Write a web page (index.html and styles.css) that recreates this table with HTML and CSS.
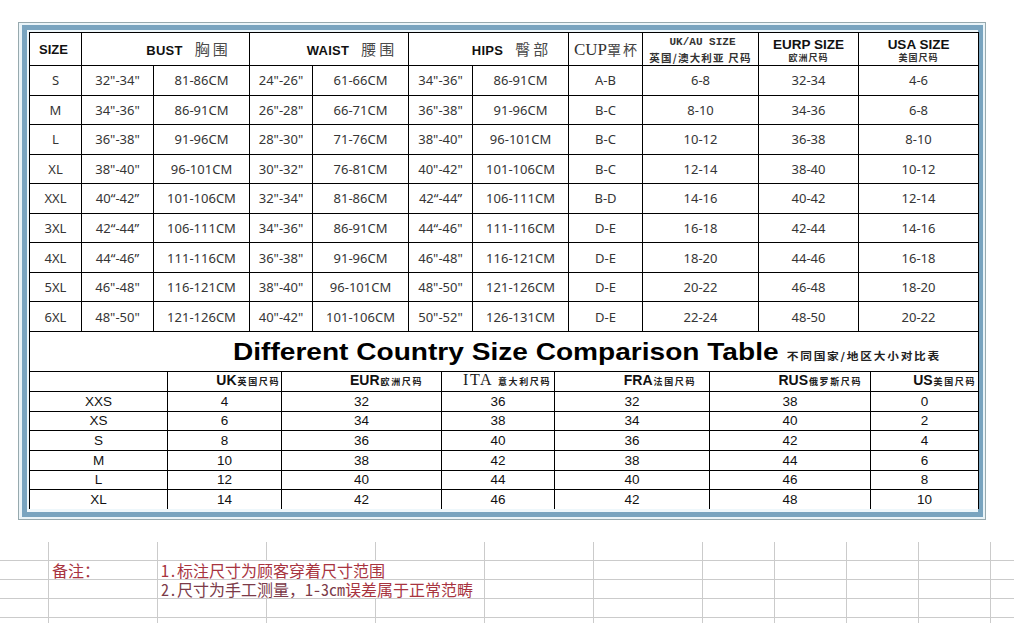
FILE: index.html
```html
<!DOCTYPE html>
<html lang="zh">
<head>
<meta charset="utf-8">
<title>Size Chart</title>
<link rel="stylesheet" href="styles.css">
</head>
<body>
<div class="frame">
  <div class="band">
    <div class="sheet">
      <table class="size">
        <colgroup>
          <col class="c52"><col class="c72"><col class="c96"><col class="c63"><col class="c96"><col class="c64"><col class="c96"><col class="c74"><col class="c116"><col class="c100"><col class="c120">
        </colgroup>
        <thead>
          <tr>
            <th class="h-plain">SIZE</th>
            <th colspan="2" class="h-shift"><span class="en">BUST</span><span class="cn">胸围</span></th>
            <th colspan="2" class="h-shift"><span class="en">WAIST</span><span class="cn">腰围</span></th>
            <th colspan="2" class="h-shift"><span class="en">HIPS</span><span class="cn">臀部</span></th>
            <th class="h-cup"><span class="serif">CUP</span><span class="cn-s">罩杯</span></th>
            <th class="h-ukau"><div class="mono">UK/AU SIZE</div><div class="tiny-cn">英国/澳大利亚 尺码</div></th>
            <th class="h-two"><div class="en2">EURP SIZE</div><div class="micro-cn">欧洲尺码</div></th>
            <th class="h-two"><div class="en2">USA SIZE</div><div class="micro-cn">美国尺码</div></th>
          </tr>
        </thead>
        <tbody>
          <tr><td>S</td><td>32"-34"</td><td>81-86CM</td><td>24"-26"</td><td>61-66CM</td><td>34"-36"</td><td>86-91CM</td><td>A-B</td><td>6-8</td><td>32-34</td><td>4-6</td></tr>
          <tr><td>M</td><td>34"-36"</td><td>86-91CM</td><td>26"-28"</td><td>66-71CM</td><td>36"-38"</td><td>91-96CM</td><td>B-C</td><td>8-10</td><td>34-36</td><td>6-8</td></tr>
          <tr><td>L</td><td>36"-38"</td><td>91-96CM</td><td>28"-30"</td><td>71-76CM</td><td>38"-40"</td><td>96-101CM</td><td>B-C</td><td>10-12</td><td>36-38</td><td>8-10</td></tr>
          <tr><td>XL</td><td>38"-40"</td><td>96-101CM</td><td>30"-32"</td><td>76-81CM</td><td>40"-42"</td><td>101-106CM</td><td>B-C</td><td>12-14</td><td>38-40</td><td>10-12</td></tr>
          <tr><td>XXL</td><td>40“-42”</td><td>101-106CM</td><td>32"-34"</td><td>81-86CM</td><td>42“-44”</td><td>106-111CM</td><td>B-D</td><td>14-16</td><td>40-42</td><td>12-14</td></tr>
          <tr><td>3XL</td><td>42“-44”</td><td>106-111CM</td><td>34"-36"</td><td>86-91CM</td><td>44“-46"</td><td>111-116CM</td><td>D-E</td><td>16-18</td><td>42-44</td><td>14-16</td></tr>
          <tr><td>4XL</td><td>44“-46”</td><td>111-116CM</td><td>36"-38"</td><td>91-96CM</td><td>46"-48"</td><td>116-121CM</td><td>D-E</td><td>18-20</td><td>44-46</td><td>16-18</td></tr>
          <tr><td>5XL</td><td>46"-48"</td><td>116-121CM</td><td>38"-40"</td><td>96-101CM</td><td>48"-50"</td><td>121-126CM</td><td>D-E</td><td>20-22</td><td>46-48</td><td>18-20</td></tr>
          <tr><td>6XL</td><td>48"-50"</td><td>121-126CM</td><td>40"-42"</td><td>101-106CM</td><td>50"-52"</td><td>126-131CM</td><td>D-E</td><td>22-24</td><td>48-50</td><td>20-22</td></tr>
        </tbody>
      </table>

      <div class="title-row">
        <div class="title-inner">
          <span class="title">Different Country Size Comparison Table</span><span class="title-cn">不同国家/地区大小对比表</span>
        </div>
      </div>

      <table class="compare">
        <colgroup>
          <col class="d138"><col class="d114"><col class="d160"><col class="d113"><col class="d155"><col class="d161"><col class="d108">
        </colgroup>
        <thead>
          <tr>
            <th></th>
            <th class="pr1"><span class="k">UK</span><span class="k-cn">英国尺码</span></th>
            <th class="pr18"><span class="k">EUR</span><span class="k-cn">欧洲尺码</span></th>
            <th class="pr3"><span class="k-serif">ITA</span><span class="k-cn">意大利尺码</span></th>
            <th class="pr13"><span class="k">FRA</span><span class="k-cn">法国尺码</span></th>
            <th class="pr8"><span class="k">RUS</span><span class="k-cn">俄罗斯尺码</span></th>
            <th class="pr2"><span class="k">US</span><span class="k-cn">美国尺码</span></th>
          </tr>
        </thead>
        <tbody>
          <tr><td>XXS</td><td>4</td><td>32</td><td>36</td><td>32</td><td>38</td><td>0</td></tr>
          <tr><td>XS</td><td>6</td><td>34</td><td>38</td><td>34</td><td>40</td><td>2</td></tr>
          <tr><td>S</td><td>8</td><td>36</td><td>40</td><td>36</td><td>42</td><td>4</td></tr>
          <tr><td>M</td><td>10</td><td>38</td><td>42</td><td>38</td><td>44</td><td>6</td></tr>
          <tr><td>L</td><td>12</td><td>40</td><td>44</td><td>40</td><td>46</td><td>8</td></tr>
          <tr><td>XL</td><td>14</td><td>42</td><td>46</td><td>42</td><td>48</td><td>10</td></tr>
        </tbody>
      </table>
    </div>
  </div>
</div>

<div class="grid">
  <div class="g"></div><div class="g"></div><div class="g"></div><div class="g"></div><div class="g"></div><div class="g"></div><div class="g"></div><div class="g"></div><div class="g"></div><div class="g"></div><div class="g"></div><div class="g last"></div>

  <div class="g note-block">1.标注尺寸为顾客穿着尺寸范围<br><span class="note-dark">2.尺寸为手工测量，1-3cm</span>误差属于正常范畴</div>

  <div class="g"></div><div class="g note-label">备注：</div><div class="g"></div><div class="g"></div><div class="g"></div><div class="g"></div><div class="g"></div><div class="g"></div><div class="g last"></div>

  <div class="g"></div><div class="g"></div><div class="g"></div><div class="g"></div><div class="g"></div><div class="g"></div><div class="g"></div><div class="g"></div><div class="g last"></div>

  <div class="g"></div><div class="g"></div><div class="g"></div><div class="g"></div><div class="g"></div><div class="g"></div><div class="g"></div><div class="g"></div><div class="g"></div><div class="g"></div><div class="g"></div><div class="g last"></div>

  <div class="g end"></div><div class="g end"></div><div class="g end"></div><div class="g end"></div><div class="g end"></div><div class="g end"></div><div class="g end"></div><div class="g end"></div><div class="g end"></div><div class="g end"></div><div class="g end"></div><div class="g end last"></div>
</div>
</body>
</html>
```

FILE: styles.css
```css
html, body {
  margin: 0;
  padding: 0;
  background: #ffffff;
}

body {
  width: 1014px;
  height: 623px;
  overflow: hidden;
  font-family: "Liberation Sans", Arial, sans-serif;
}

/* ---------- framed sheet ---------- */
.frame {
  margin: 22px 0 0 18px;
  width: 968px;
  border: 1px solid #97a9ae;
  background: #eaf4f8;
  padding: 2px 2px 2px 3px;
  box-sizing: border-box;
}

.band {
  border: 5px solid #79a4bf;
  background: #eef7fb;
  padding: 2px 2px 3px 2px;
}

.sheet {
  width: 950px;
  background: #ffffff;
}

table {
  border-collapse: collapse;
  table-layout: fixed;
  width: 950px;
}

th, td {
  border: 1px solid #000;
  padding: 0;
  text-align: center;
  white-space: nowrap;
  overflow: visible;
}

/* ---------- size table ---------- */
.c52 { width: 52px; }
.c72 { width: 72px; }
.c96 { width: 96px; }
.c63 { width: 63px; }
.c64 { width: 64px; }
.c74 { width: 74px; }
.c116 { width: 116px; }
.c100 { width: 100px; }
.c120 { width: 120px; }

.size thead tr { height: 33px; }
.size tbody tr { height: 29.55px; }

.size td {
  font-family: "Noto Sans", "Open Sans", sans-serif;
  font-size: 13px;
  color: #353535;
  line-height: 16px;
}

.size th {
  font-weight: normal;
  vertical-align: middle;
  line-height: 1;
}

.h-plain {
  font-weight: bold !important;
  font-size: 13px;
  color: #111;
  text-align: center;
  padding-right: 4px !important;
}

.h-shift {
  padding-left: 46px !important;
}

.en {
  font-family: "Liberation Sans", Arial, sans-serif;
  font-weight: bold;
  font-size: 13px;
  color: #111;
  letter-spacing: 0.3px;
}

.cn {
  font-family: "Noto Sans CJK SC", sans-serif;
  font-size: 15px;
  font-weight: normal;
  color: #4a4a4a;
  margin-left: 12px;
  letter-spacing: 3px;
}

.h-cup {
  padding-left: 2px !important;
}

.serif {
  font-family: "Liberation Serif", "Times New Roman", serif;
  font-size: 17px;
  color: #333;
}

.cn-s {
  font-family: "Noto Sans CJK SC", sans-serif;
  font-size: 14px;
  font-weight: normal;
  color: #444;
  letter-spacing: 2px;
}

.h-ukau {
  padding-top: 2px !important;
}

.mono {
  font-family: "Liberation Mono", "Courier New", monospace;
  font-size: 11px;
  font-weight: bold;
  color: #333;
  padding-left: 4px;
  line-height: 13px;
}

.tiny-cn {
  font-family: "Noto Sans CJK SC", sans-serif;
  font-size: 10.5px;
  font-weight: bold;
  color: #333;
  letter-spacing: 1.2px;
  line-height: 13px;
  margin-top: 2px;
}

.h-two {
  padding-top: 2px !important;
}

.en2 {
  font-family: "Liberation Sans", Arial, sans-serif;
  font-weight: bold;
  font-size: 13.5px;
  color: #111;
  line-height: 15px;
}

.micro-cn {
  font-family: "Noto Sans CJK SC", sans-serif;
  font-size: 9px;
  font-weight: bold;
  color: #333;
  letter-spacing: 1px;
  line-height: 11px;
}

/* ---------- title row ---------- */
.title-row {
  height: 39px;
  border-left: 1px solid #000;
  border-right: 1px solid #000;
  box-sizing: border-box;
  display: flex;
  align-items: center;
  padding-left: 203px;
}

.title-inner {
  display: flex;
  align-items: baseline;
  transform: scaleX(1.17);
  transform-origin: left center;
  white-space: nowrap;
  margin-top: 1px;
}

.title {
  font-family: "Liberation Sans", Arial, sans-serif;
  font-weight: bold;
  font-size: 24px;
  color: #000;
}

.title-cn {
  font-family: "Noto Sans CJK SC", sans-serif;
  font-size: 10px;
  font-weight: bold;
  color: #222;
  letter-spacing: 1.5px;
  margin-left: 7px;
}

/* ---------- comparison table ---------- */
.d138 { width: 138px; }
.d114 { width: 114px; }
.d160 { width: 160px; }
.d113 { width: 113px; }
.d155 { width: 155px; }
.d161 { width: 161px; }
.d108 { width: 108px; }

.compare thead tr { height: 20px; }
.compare tbody tr { height: 19.67px; }
.compare tbody tr:last-child td { border-bottom: none; }

.compare td {
  font-family: "Liberation Sans", Arial, sans-serif;
  font-size: 13.5px;
  color: #111;
  line-height: 15px;
}

.compare th {
  text-align: right;
  font-weight: normal;
  line-height: 16px;
}

.pr1 { padding-right: 1px !important; }
.pr2 { padding-right: 2px !important; }
.pr3 { padding-right: 3px !important; }
.pr8 { padding-right: 8px !important; }
.pr13 { padding-right: 13px !important; }
.pr18 { padding-right: 18px !important; }

.k {
  font-family: "Liberation Sans", Arial, sans-serif;
  font-weight: bold;
  font-size: 14px;
  color: #111;
}

.k-serif {
  font-family: "Liberation Serif", "Times New Roman", serif;
  font-size: 16px;
  color: #222;
  letter-spacing: 1.5px;
  margin-right: 4px;
}

.k-cn {
  font-family: "Noto Sans CJK SC", sans-serif;
  font-size: 9px;
  font-weight: bold;
  color: #222;
  letter-spacing: 1.6px;
  margin-left: 1px;
}

/* ---------- spreadsheet grid ---------- */
.grid {
  margin-top: 22px;
  display: grid;
  grid-template-columns: 49px repeat(6, 109px) repeat(4, 72px) 1fr;
  grid-template-rows: 19px 19px 19px 19px 6px;
  width: 1014px;
}

.g {
  border-right: 1px solid #cbcbcb;
  border-bottom: 1px solid #cbcbcb;
  box-sizing: border-box;
  white-space: nowrap;
  overflow: visible;
}

.g.last {
  border-right: none;
}

.g.end {
  border-bottom: none;
}

.note-block {
  grid-column: 3 / span 3;
  grid-row: 2 / span 2;
  background: linear-gradient(#cbcbcb, #cbcbcb) 0 18px / 100% 1px no-repeat;
  font-family: "Noto Sans Mono CJK SC", "Noto Sans CJK SC", sans-serif;
  font-size: 16px;
  font-weight: 300;
  line-height: 19px;
  color: #a8343f;
  padding-left: 3px;
}

.note-label {
  font-family: "Noto Sans Mono CJK SC", "Noto Sans CJK SC", sans-serif;
  font-size: 16px;
  font-weight: 300;
  line-height: 19px;
  color: #a8343f;
  padding-left: 3px;
}

.note-dark {
  color: #7b3a48;
}
```
